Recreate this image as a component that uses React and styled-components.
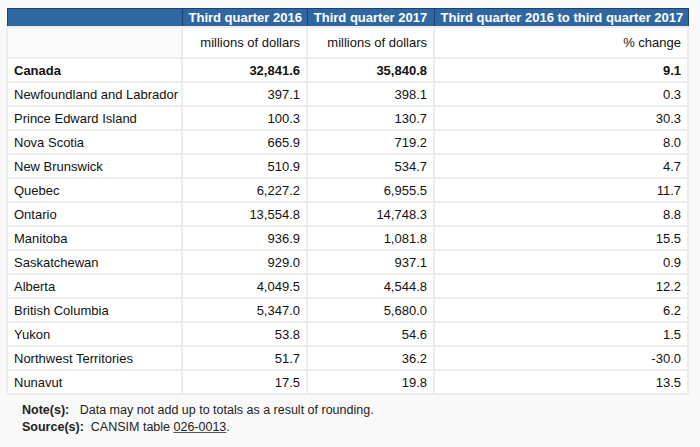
import React from 'react';
import styled, { createGlobalStyle } from 'styled-components';

const rows = [
  ['Canada', '32,841.6', '35,840.8', '9.1', true],
  ['Newfoundland and Labrador', '397.1', '398.1', '0.3'],
  ['Prince Edward Island', '100.3', '130.7', '30.3'],
  ['Nova Scotia', '665.9', '719.2', '8.0'],
  ['New Brunswick', '510.9', '534.7', '4.7'],
  ['Quebec', '6,227.2', '6,955.5', '11.7'],
  ['Ontario', '13,554.8', '14,748.3', '8.8'],
  ['Manitoba', '936.9', '1,081.8', '15.5'],
  ['Saskatchewan', '929.0', '937.1', '0.9'],
  ['Alberta', '4,049.5', '4,544.8', '12.2'],
  ['British Columbia', '5,347.0', '5,680.0', '6.2'],
  ['Yukon', '53.8', '54.6', '1.5'],
  ['Northwest Territories', '51.7', '36.2', '-30.0'],
  ['Nunavut', '17.5', '19.8', '13.5'],
];

const Global = createGlobalStyle`
  body {
    margin: 0;
    background: #f9f9f9;
    font-family: "Liberation Sans", Arial, sans-serif;
    color: #111;
  }
`;

const Page = styled.div`
  padding: 8px 0 0 6px;
`;

const Table = styled.table`
  border-collapse: collapse;
  width: 681px;
  table-layout: fixed;
  font-size: 13px;
  background: #fff;
`;

const Head = styled.th`
  background: #2f67a3;
  color: #fff;
  font-weight: bold;
  height: 17px;
  padding: 0 6px;
  text-align: ${p => (p.$left ? 'left' : 'center')};
  border: 1px solid #1d3f74;
  white-space: nowrap;
`;

const Cell = styled.td`
  height: 22px;
  padding: 0 6px;
  border: 2px solid #ececec;
  text-align: ${p => (p.$left ? 'left' : 'right')};
  font-weight: ${p => (p.$bold ? 'bold' : 'normal')};
  white-space: nowrap;
  background: ${p => (p.$shade ? '#fafafa' : '#fff')};
`;

const UnitCell = styled(Cell)`
  height: 29px;
`;

const Notes = styled.div`
  padding: 7px 0 0 16px;
  font-size: 12.5px;
  line-height: 17px;
  color: #222;
`;

const NoteLine = styled.div`
  display: flex;
  gap: 7px;
  b { font-weight: bold; }
  a { color: #222; text-decoration: underline; text-decoration-color: #555; }
`;

export default function App() {
  return (
    <Page>
      <Global />
      <Table>
        <colgroup>
          <col style={{ width: 175 }} />
          <col style={{ width: 125 }} />
          <col style={{ width: 127 }} />
          <col style={{ width: 254 }} />
        </colgroup>
        <thead>
          <tr>
            <Head $left />
            <Head>Third quarter 2016</Head>
            <Head>Third quarter 2017</Head>
            <Head>Third quarter 2016 to third quarter 2017</Head>
          </tr>
        </thead>
        <tbody>
          <tr>
            <UnitCell $left $shade />
            <UnitCell>millions of dollars</UnitCell>
            <UnitCell>millions of dollars</UnitCell>
            <UnitCell>% change</UnitCell>
          </tr>
          {rows.map(([name, a, b, c, bold]) => (
            <tr key={name}>
              <Cell $left $bold={bold}>{name}</Cell>
              <Cell $bold={bold}>{a}</Cell>
              <Cell $bold={bold}>{b}</Cell>
              <Cell $bold={bold}>{c}</Cell>
            </tr>
          ))}
        </tbody>
      </Table>
      <Notes>
        <NoteLine><b>Note(s):</b><span>&nbsp;Data may not add up to totals as a result of rounding.</span></NoteLine>
        <NoteLine><b>Source(s):</b><span>CANSIM table <a>026-0013</a>.</span></NoteLine>
      </Notes>
    </Page>
  );
}
